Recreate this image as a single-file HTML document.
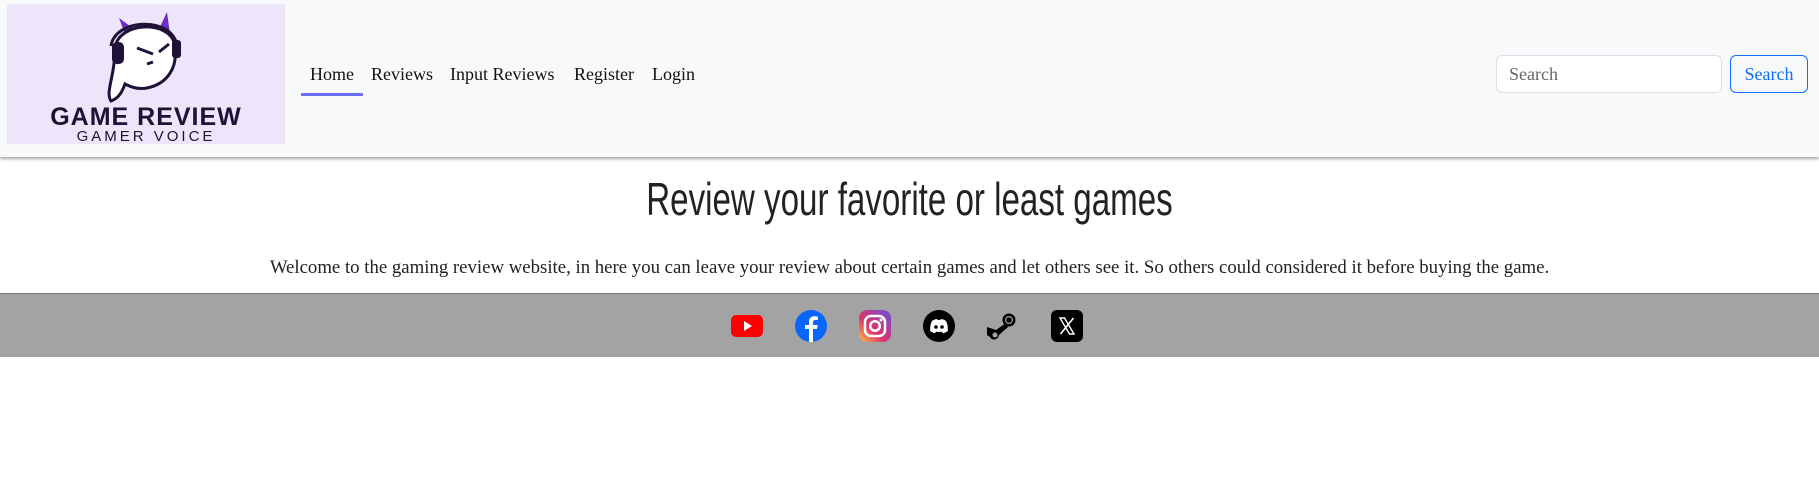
<!DOCTYPE html>
<html><head><meta charset="utf-8"><style>
*{margin:0;padding:0;box-sizing:border-box}
body{width:1819px;height:499px;background:#fff;font-family:"Liberation Serif",serif;position:relative;overflow:hidden}
header{position:absolute;left:0;top:0;width:1819px;height:157px;background:#f8f9fa;box-shadow:0 2px 3px rgba(0,0,0,.35)}
.logo{position:absolute;left:7px;top:4px;width:278px;height:140px;background:#ede6fb}
.logo .t1{position:absolute;left:0;width:278px;top:99px;text-align:center;font:bold 25px "Liberation Sans",sans-serif;color:#1f1236;letter-spacing:1px}
.logo .t2{position:absolute;left:0;width:278px;top:124px;text-align:center;font:15px "Liberation Sans",sans-serif;color:#1f1236;letter-spacing:3px}
nav a{position:absolute;top:64px;font-size:18px;color:#111;text-decoration:none}
.ul{position:absolute;left:301px;top:93px;width:62px;height:3px;background:#6b6ff8}
.inp{position:absolute;left:1496px;top:55px;width:226px;height:38px;background:#fff;border:1px solid #dcdfe4;border-radius:6px;font-size:18px;color:#666;padding:8px 12px}
.btn{position:absolute;left:1730px;top:55px;width:78px;height:38px;border:1px solid #0d6efd;border-radius:6px;font-size:18px;color:#0d6efd;text-align:center;padding-top:8px}
h1{position:absolute;left:0;top:172px;width:1819px;text-align:center;font:300 46px "Liberation Sans Narrow","Liberation Sans",sans-serif;color:#222;transform:scaleX(.72)}
p{position:absolute;left:0;top:257px;width:1819px;text-align:center;font-size:18.8px;color:#222}
footer{position:absolute;left:0;top:293px;width:1819px;height:64px;background:#a3a3a3;border-top:1px solid #777}
.ic{position:absolute;top:16px;width:32px;height:32px}
</style></head><body>
<header>
<div class="logo">
<svg width="278" height="100" style="position:absolute;left:0;top:0">
<path d="M112 14 L118 30 L127 25Z M160 8 L152 25 L163 30Z" fill="#6a2fc9"/>
<path d="M108 46 C108 18 164 14 168 42 C171 64 160 80 140 84 C130 86 122 82 118 80 C115 88 112 94 104 97 C98 88 108 72 108 46Z" fill="#fff" stroke="#1f1236" stroke-width="3"/>
<path d="M104 42 C108 14 166 12 170 42" fill="none" stroke="#1f1236" stroke-width="3"/>
<rect x="105" y="38" width="12" height="22" rx="5" fill="#1f1236"/>
<rect x="165" y="36" width="9" height="18" rx="3" fill="#1f1236"/>
<path d="M130 44 L146 50 M152 48 L162 40 M140 60 L146 58" stroke="#1f1236" stroke-width="3"/>
</svg>
<div class="t1">GAME REVIEW</div><div class="t2">GAMER VOICE</div>
</div>
<nav>
<a style="left:310px">Home</a><a style="left:371px">Reviews</a><a style="left:450px">Input Reviews</a><a style="left:574px">Register</a><a style="left:652px">Login</a>
</nav>
<div class="ul"></div>
<div class="inp">Search</div>
<div class="btn">Search</div>
</header>
<h1>Review your favorite or least games</h1>
<p>Welcome to the gaming review website, in here you can leave your review about certain games and let others see it. So others could considered it before buying the game.</p>
<footer>
<svg class="ic" style="left:731px" viewBox="0 0 32 32"><rect x="0" y="5" width="32" height="22" rx="5" fill="#f00"/><path d="M13 11 L21 16 L13 21Z" fill="#fff"/></svg>
<svg class="ic" style="left:795px" viewBox="0 0 32 32"><circle cx="16" cy="16" r="16" fill="#0866ff"/><path d="M18 32 V19 H22 L22.6 15 H18 V12.5 C18 11 18.6 10 20.5 10 H22.8 V6.5 C22 6.4 20.6 6.2 19.3 6.2 C16 6.2 14 8.2 14 11.8 V15 H10 V19 H14 V32Z" fill="#fff"/></svg>
<svg class="ic" style="left:859px" viewBox="0 0 32 32"><defs><linearGradient id="g" x1="0" y1="1" x2="1" y2="0"><stop offset="0" stop-color="#fdc246"/><stop offset=".4" stop-color="#e0336b"/><stop offset="1" stop-color="#6a4fd6"/></linearGradient></defs><rect width="32" height="32" rx="8" fill="url(#g)"/><rect x="6" y="6" width="20" height="20" rx="6" fill="none" stroke="#fff" stroke-width="2.5"/><circle cx="16" cy="16" r="4.8" fill="none" stroke="#fff" stroke-width="2.5"/><circle cx="22" cy="10" r="1.5" fill="#fff"/></svg>
<svg class="ic" style="left:923px" viewBox="0 0 32 32"><circle cx="16" cy="16" r="16" fill="#000"/><path d="M9 11 C11 9.5 13 9 14 9 L14.5 10 C15.5 9.8 16.5 9.8 17.5 10 L18 9 C19 9 21 9.5 23 11 C24.5 14 25 17 24.8 21 C23 22.4 21.5 23 20 23.3 L19 21.8 C18 22 14 22 13 21.8 L12 23.3 C10.5 23 9 22.4 7.2 21 C7 17 7.5 14 9 11Z" fill="#fff"/><circle cx="13" cy="17" r="1.8" fill="#000"/><circle cx="19" cy="17" r="1.8" fill="#000"/></svg>
<svg class="ic" style="left:987px" viewBox="0 0 32 32"><circle cx="22" cy="10" r="6.5" fill="#000"/><circle cx="22" cy="10" r="4" fill="#a3a3a3"/><circle cx="22" cy="10" r="2.8" fill="#000"/><path d="M0 17 L9 20 L19 13 L21 17 L12 25 C11 30 5 31 3 27 L0 25Z" fill="#000"/><circle cx="8" cy="25" r="2.5" fill="#a3a3a3"/></svg>
<svg class="ic" style="left:1051px" viewBox="0 0 32 32"><rect width="32" height="32" rx="6" fill="#000"/><path d="M9 8 H13.5 L23 24 H18.5Z" fill="none" stroke="#fff" stroke-width="1.4"/><path d="M22.5 8 L9.5 24" stroke="#fff" stroke-width="1.6"/></svg>
</footer>
</body></html>
